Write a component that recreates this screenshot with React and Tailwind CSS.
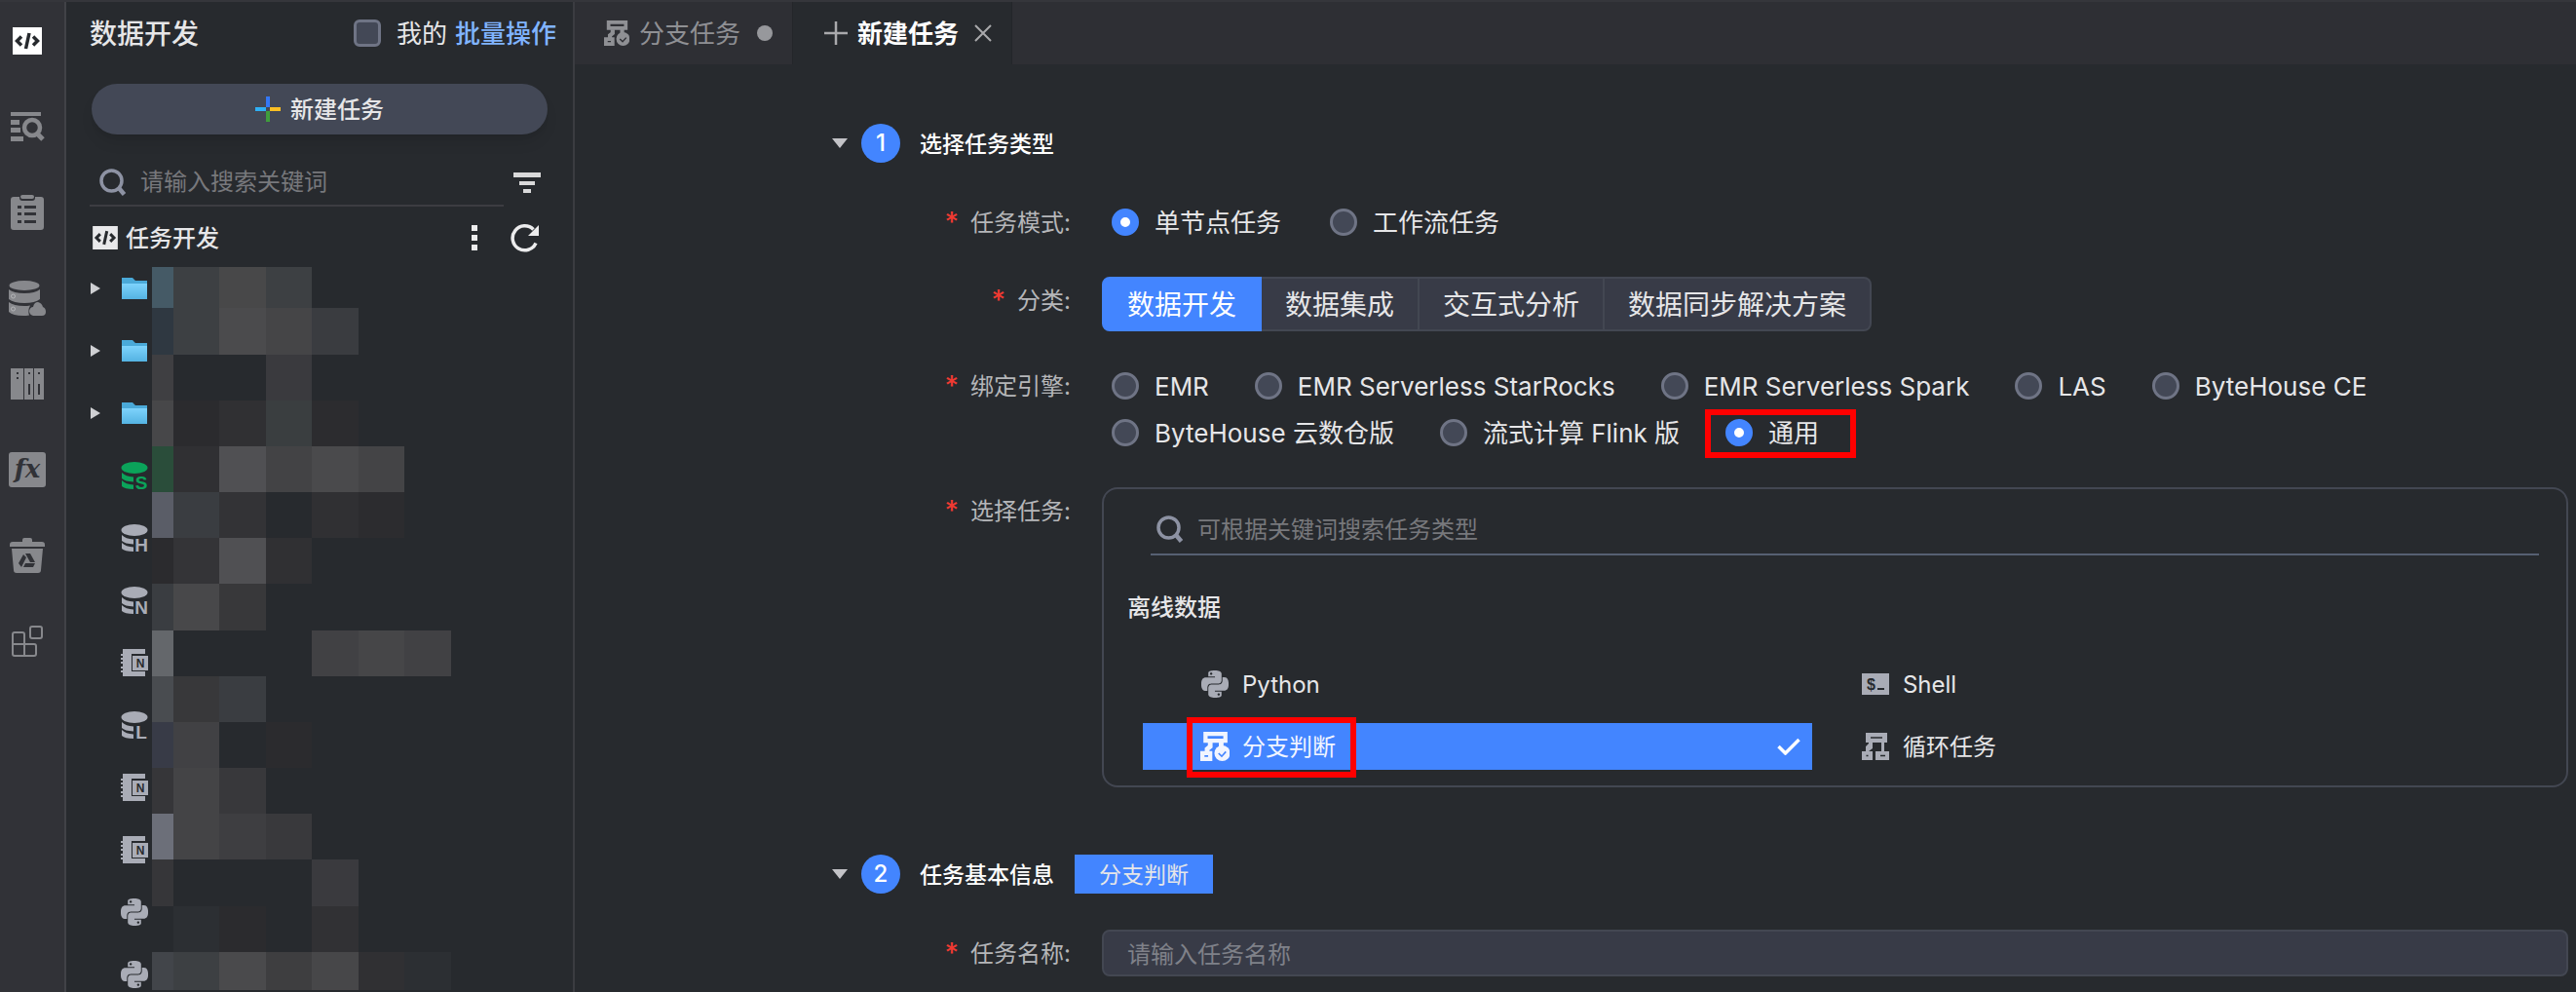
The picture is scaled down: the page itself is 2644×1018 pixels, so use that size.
import React, { useState } from 'react';
import clsx from 'clsx';
import { SiPython } from 'react-icons/si';

/* ---------- icons ---------- */

const CodeIcon = ({ className }) => (
  <svg viewBox="0 0 30 28" className={className}>
    <rect width="30" height="28" fill="currentColor" />
    <g fill="none" stroke="#272a2e" strokeWidth="3.500">
      <path d="M9 9.500L4.500 14 9 18.500M21 9.500l4.500 4.500-4.500 4.500M17 6l-3.500 16" />
    </g>
  </svg>
);

const QueryIcon = () => (
  <svg viewBox="0 0 36 34" className="h-[34px] w-9" fill="currentColor">
    <path d="M1 2h31v4H1zM1 10h9v5H1zM1 18h10v5H1zM1 27h13v5H1z" />
    <circle cx="23" cy="18" r="8" fill="none" stroke="currentColor" strokeWidth="4.500" />
    <path d="M28 24l6 6" stroke="currentColor" strokeWidth="5" />
  </svg>
);

const ClipboardIcon = () => (
  <svg viewBox="0 0 34 36" className="h-9 w-[34px]">
    <path fill="currentColor" d="M3 2h6v1q0 3 3 3h10q3 0 3-3V2h6q3 0 3 3v28q0 3-3 3H3q-3 0-3-3V5q0-3 3-3z" />
    <rect x="10" y="0" width="14" height="4" rx="2" fill="currentColor" />
    <path fill="#313237" d="M7 11h4v3H7zM14 11h12v3H14zM7 18h4v3H7zM14 18h12v3H14zM7 26h4v3H7zM14 26h12v3H14z" />
  </svg>
);

const DataCloudIcon = () => (
  <svg viewBox="0 0 38 36" className="h-9 w-[38px]" fill="currentColor">
    <ellipse cx="16" cy="5" rx="15.500" ry="5" />
    <path d="M0 9q5 4 16 4t16-4v10q-5 4-16 4T0 19z" />
    <path d="M0 22q5 4 16 4 3 0 6-.500-1 2-1.500 4-.500 3 .500 6-3 .500-6 .500Q4 36 0 32z" />
    <path d="M25 36q-4-1-4-5 1-4 4-4 1-5 5-5 4 1 5 5 3 1 3 5 0 4-4 4z" />
    <circle cx="4.500" cy="16" r="2" fill="none" stroke="#b4b5b8" />
    <circle cx="4.500" cy="29" r="2" fill="none" stroke="#b4b5b8" />
  </svg>
);

const BooksIcon = () => (
  <svg viewBox="0 0 34 32" className="h-8 w-[34px]">
    <path fill="currentColor" d="M0 0h13v32H0zM14 0h9v32h-9zM24 0h10v32H24z" />
    <path fill="#313237" d="M6 4h2v2H6zM6 9h2v2H6zM18 4h2v2h-2zM28 4h2v2h-2zM18 16h2v11h-2zM28 16h2v11h-2z" />
  </svg>
);

const FxIcon = () => (
  <svg viewBox="0 0 38 36" className="h-9 w-[38px]">
    <rect width="38" height="36" rx="3" fill="currentColor" />
    <text x="19" y="26" textAnchor="middle" fill="#313237" fontFamily="DejaVu Serif, serif" fontStyle="italic" fontWeight="700" fontSize="26">fx</text>
  </svg>
);

const TrashIcon = () => (
  <svg viewBox="0 0 36 36" className="size-9">
    <path fill="currentColor" d="M13 4V2q0-2 2-2h6q2 0 2 2v2h10q3 0 3 3v2H0V7q0-3 3-3zM2 11h32l-2 22q0 3-3 3H7q-3 0-3-3z" />
    <path fill="#313237" d="M14 17l3 3-5 10-3-4zM16 16h5l5 9h-5zM14 30l2-4h10l-2 4z" />
  </svg>
);

const BlocksIcon = () => (
  <svg viewBox="0 0 32 32" className="size-8" fill="none" stroke="currentColor" strokeWidth="2">
    <path d="M1 29V9q0-2 2-2h8q2 0 2 2v22M1 19h22q2 0 2 2v8q0 2-2 2H3q-2 0-2-2" />
    <rect x="19" y="1" width="12" height="12" rx="2" />
  </svg>
);

const SearchIcon = () => (
  <svg viewBox="0 0 28 28" className="size-7 shrink-0 text-[#8d92a3]" fill="none" stroke="currentColor" strokeWidth="3.500">
    <circle cx="12.500" cy="12.500" r="10.500" />
    <path d="M20 20l5.500 6.500" strokeWidth="4.500" />
  </svg>
);

const ColorPlusIcon = () => (
  <svg viewBox="0 0 26 26" className="size-[26px]">
    <path fill="#3478f6" d="M11 0h4v11h-4z" />
    <path fill="#2fb0f5" d="M0 11h11v4H0z" />
    <path fill="#fbbf24" d="M15 11h11v4H15z" />
    <path fill="#3f9d3c" d="M11 15h4v11h-4z" />
  </svg>
);

const FilterIcon = () => (
  <svg viewBox="0 0 28 22" className="h-[22px] w-7" fill="#d9d9da">
    <path d="M0 0h28v5H0zM6 9h16v4H6zM10 17h8v4h-8z" />
  </svg>
);

const RefreshIcon = () => (
  <svg viewBox="0 0 30 30" className="size-[30px]">
    <path d="M26 20.500A12.500 12.500 0 1 1 23.500 6.500" fill="none" stroke="#ececed" strokeWidth="3.500" />
    <path d="M29 2v11H18z" fill="#ececed" />
  </svg>
);

const FolderIcon = () => (
  <svg viewBox="0 0 26 22" className="h-[22px] w-[26px]">
    <defs>
      <linearGradient id="folder" x1="0" y1="0" x2="0" y2="1">
        <stop offset="0" stopColor="#7ed3fc" />
        <stop offset="1" stopColor="#54b3e2" />
      </linearGradient>
    </defs>
    <path fill="#4aa9d8" d="M0 0h11l3 3h12v6H0z" />
    <path fill="url(#folder)" d="M0 6h26v16H0z" />
  </svg>
);

const DbIcon = ({ letter }) => (
  <svg viewBox="0 0 28 28" className="size-7 overflow-visible" fill="currentColor">
    <ellipse cx="14" cy="6" rx="13.500" ry="6" />
    <path d="M1 11q4 4 12 4.500v5Q4 20 1 17zM1 19q4 4 12 4.500V28Q4 28 1 25z" />
    <text x="21" y="28" textAnchor="middle" fontFamily="Liberation Sans, sans-serif" fontWeight="700" fontSize="19">{letter}</text>
  </svg>
);

const NotebookIcon = () => (
  <svg viewBox="0 0 28 30" className="h-[30px] w-7">
    <path fill="currentColor" d="M2 1h23v5H12v18h13v5H2v-4H0v-2h2v-2H0v-2h2v-3H0v-2h2v-2H0v-2h2V8H0V6h2z" />
    <rect x="12" y="8" width="16" height="15" fill="currentColor" />
    <path d="M11.500 6v18" stroke="#272a2e" />
    <text x="20" y="20" textAnchor="middle" fill="#272a2e" fontFamily="Liberation Sans, sans-serif" fontWeight="700" fontSize="12">N</text>
  </svg>
);

const BranchIcon = ({ className, mark = '#272a2e' }) => (
  <svg viewBox="0 0 28 28" className={className}>
    <g fill="none" stroke="currentColor" strokeWidth="4">
      <path d="M5 2h19v6.500H5z" />
      <path d="M9.500 10v4l-3 2.500V20M20 9v5" strokeWidth="4.500" />
      <path d="M2 20.500h7.500V26H2z" />
    </g>
    <circle cx="21" cy="20.500" r="7.500" fill="currentColor" />
    <path d="M17.500 20.500l3 3 4-4.500" fill="none" stroke={mark} strokeWidth="1.500" />
  </svg>
);

const LoopIcon = () => (
  <svg viewBox="0 0 28 28" className="size-7">
    <path fill="currentColor" d="M4 0h22v10h-3v9h5v9H14v-9h6v-9H11v6l-4 3h4v9H0v-9h4v-5l3-3v-1H4z" />
    <path d="M9 5h12M4.500 23.500h2M19 23.500h5" stroke="#272a2e" strokeWidth="1.500" />
  </svg>
);

const ShellIcon = () => (
  <svg viewBox="0 0 28 22" className="h-[22px] w-7">
    <rect width="28" height="22" fill="currentColor" />
    <text x="5" y="17" fill="#272a2e" fontFamily="Liberation Sans, sans-serif" fontWeight="700" fontSize="16">$</text>
    <path d="M16 15h7v2h-7z" fill="#272a2e" />
  </svg>
);

const CaretDown = () => (
  <svg viewBox="0 0 16 10" className="h-2.5 w-4">
    <path d="M0 0h16L8 10z" fill="#c3c3c7" />
  </svg>
);

/* ---------- data ---------- */

const railItems = [
  { label: '数据开发', icon: <CodeIcon className="h-7 w-[30px]" />, active: true },
  { label: '查询', icon: <QueryIcon /> },
  { label: '运维', icon: <ClipboardIcon /> },
  { label: '数据源', icon: <DataCloudIcon /> },
  { label: '资源库', icon: <BooksIcon /> },
  { label: '函数', icon: <FxIcon /> },
  { label: '回收站', icon: <TrashIcon /> },
  { label: '扩展', icon: <BlocksIcon /> },
];

const treeItems = ['folder', 'folder', 'folder', 'S', 'H', 'N', 'note', 'L', 'note', 'note', 'python', 'python'];

// masked names, one array per row of cells
const mosaic = [
  ['#455a66', '#3d4043', '#484849', '#3d4043', '', '', ''],
  ['#2f3841', '#3d4043', '#4b4b4d', '#454547', '#3a3c40', '', ''],
  ['#3f3f42', '', '', '#3a3a3e', '', '', ''],
  ['#474749', '#2b2b2e', '#303033', '#3a3e40', '#2c2c2f', '', ''],
  ['#2a4d3a', '#303033', '#505053', '#434345', '#4a4a4c', '#444446', ''],
  ['#5a5d67', '#3a3d41', '#333336', '', '#303033', '#2c2c2f', ''],
  ['#2b2b2e', '#343437', '#505053', '#303033', '', '', ''],
  ['#3a3d41', '#48484a', '#38383a', '', '', '', ''],
  ['#64676b', '', '', '', '#414144', '#464648', '#414144'],
  ['#494c50', '#38383a', '#3a3d41', '', '', '', ''],
  ['#383b47', '#414144', '', '#2b2b2e', '', '', ''],
  ['#363639', '#444446', '#38383b', '', '', '', ''],
  ['#6c6f79', '#444446', '#3e3e41', '#39393c', '', '', ''],
  ['#363639', '', '', '', '#3a3a3e', '', ''],
  ['', '#2c2f33', '#2b2b2e', '', '#313134', '', ''],
  ['#42454a', '#3d4043', '#4a4a4c', '#3e3e40', '#474749', '#303033', '#2c2f33'],
];

const categories = ['数据开发', '数据集成', '交互式分析', '数据同步解决方案'];
const engines = [
  'EMR',
  'EMR Serverless StarRocks',
  'EMR Serverless Spark',
  'LAS',
  'ByteHouse CE',
  'ByteHouse 云数仓版',
  '流式计算 Flink 版',
  '通用',
];

const taskTypes = [
  { name: 'Python', icon: <SiPython className="size-7" /> },
  { name: 'Shell', icon: <ShellIcon /> },
  { name: '分支判断', icon: <BranchIcon className="size-[30px]" mark="#4385ff" /> },
  { name: '循环任务', icon: <LoopIcon /> },
];

/* ---------- pieces ---------- */

const TreeIcon = ({ type }) => {
  if (type === 'folder') return <FolderIcon />;
  if (type === 'note') return <NotebookIcon />;
  if (type === 'python') return <SiPython className="size-7" />;
  return <DbIcon letter={type} />;
};

const Rail = () => (
  <nav className="flex w-[68px] shrink-0 flex-col gap-12 border-r-2 border-[#414247] bg-[#313237] pt-5">
    {railItems.map((item) => (
      <button
        key={item.label}
        aria-label={item.label}
        className={clsx('flex h-10 items-center justify-center pr-2.5', item.active ? 'text-white' : 'text-[#87888c]')}
      >
        {item.icon}
      </button>
    ))}
  </nav>
);

const Sidebar = () => (
  <aside className="flex w-[522px] shrink-0 flex-col border-r-2 border-[#3b3c41]">
    <div className="flex h-16 items-center pl-6 pr-[17px]">
      <h1 className="flex-1 pt-0.5 text-[28px] font-medium">数据开发</h1>
      <label className="flex items-center gap-4 text-[26px]">
        <input type="checkbox" className="size-7 appearance-none rounded-md border-3 border-[#6f7485] bg-[#434856] checked:bg-[#4385ff]" />
        <span className="pt-0.5">我的</span>
      </label>
      <a href="#batch" className="ml-2 pt-0.5 text-[26px] font-medium text-[#80b4ff]">批量操作</a>
    </div>

    <button className="mx-[26px] mt-5 flex h-13 shrink-0 items-center justify-center gap-2.5 rounded-[26px] bg-[#434856] text-2xl font-medium shadow-lg">
      <ColorPlusIcon />
      <span className="pt-0.5">新建任务</span>
    </button>

    <div className="mt-[26px] flex h-12 shrink-0 pl-6">
      <div className="flex flex-1 items-center gap-3.5 border-b-2 border-[#3c3d42] pl-2.5">
        <SearchIcon />
        <input
          aria-label="搜索"
          placeholder="请输入搜索关键词"
          className="min-w-0 flex-1 bg-transparent text-2xl outline-none placeholder:text-[#77787c]"
        />
      </div>
      <button aria-label="筛选" className="flex w-[72px] items-center pl-2.5">
        <FilterIcon />
      </button>
    </div>

    <div className="mt-3 flex h-10 shrink-0 items-center pl-[27px] pr-[34px]">
      <CodeIcon className="h-6 w-[26px] text-[#e8e8ea]" />
      <h2 className="ml-2 flex-1 pt-0.5 text-2xl font-medium">任务开发</h2>
      <button aria-label="更多" className="mr-[34px]">
        <svg viewBox="0 0 6 26" className="h-[26px] w-1.5" fill="#ececed">
          <path d="M0 0h6v6H0zM0 10h6v6H0zM0 20h6v6H0z" />
        </svg>
      </button>
      <button aria-label="刷新">
        <RefreshIcon />
      </button>
    </div>

    <div className="relative min-h-0 flex-1 overflow-hidden">
      <ul>
        {treeItems.map((type, i) => (
          <li key={i} className="flex h-16 items-center pl-[25px]">
            <span className="w-[31px] shrink-0">
              {type === 'folder' && (
                <svg viewBox="0 0 10 12" className="h-3 w-2.5">
                  <path d="M0 0l10 6-10 6z" fill="#cfd0d3" />
                </svg>
              )}
            </span>
            <span className={clsx('flex w-7 justify-center', type === 'S' ? 'text-[#0ba35a]' : 'text-[#a9acb6]')}>
              <TreeIcon type={type} />
            </span>
          </li>
        ))}
      </ul>
      <div className="absolute top-2.5 left-[88px] grid grid-cols-[22px_47px_48px_47px_48px_47px_48px] grid-rows-[42px_48px_47px_47px_47px_47px_47px_48px_47px_47px_47px_47px_47px_48px_47px_39px]">
        {mosaic.flat().map((color, i) => (
          <span key={i} style={{ backgroundColor: color || 'transparent' }} />
        ))}
      </div>
    </div>
  </aside>
);

const Tabs = () => (
  <div className="flex h-16 shrink-0 bg-[#2e2f34] text-[26px]">
    <button className="flex items-center border-r border-[#232529] pl-[30px] pr-5 text-[#8f9094]">
      <BranchIcon className="size-[26px]" mark="#2e2f34" />
      <span className="ml-2.5 pt-0.5">分支任务</span>
      <span className="ml-[17px] size-4 rounded-full bg-[#97989c]" />
    </button>
    <div className="flex items-center border-r border-[#232529] bg-[#272a2e] pl-8 pr-5">
      <svg viewBox="0 0 24 24" className="size-6">
        <path d="M12 0v24M0 12h24" stroke="#a9a9ac" strokeWidth="2.500" />
      </svg>
      <span className="ml-2.5 pt-0.5 font-bold text-white">新建任务</span>
      <button aria-label="关闭" className="ml-4">
        <svg viewBox="0 0 18 18" className="size-[18px]">
          <path d="M1 1l16 16M17 1L1 17" stroke="#a9a9ac" strokeWidth="2" />
        </svg>
      </button>
    </div>
  </div>
);

const SectionHead = ({ step, title, children }) => (
  <div className="mb-[37px] flex h-10 items-center">
    <CaretDown />
    <span className="ml-3.5 flex size-10 items-center justify-center rounded-full bg-[#4385ff] text-2xl font-medium text-white">{step}</span>
    <h2 className="ml-5 pt-0.5 text-[23px] font-medium text-white">{title}</h2>
    {children}
  </div>
);

const Row = ({ label, htmlFor, children }) => {
  const Tag = htmlFor ? 'label' : 'span';
  return (
    <div className="mb-8 flex gap-8">
      <Tag htmlFor={htmlFor} className="flex h-12 w-[245px] shrink-0 items-center justify-end pt-0.5 text-2xl text-[#b5b6b9]">
        <span className="mr-3 text-[28px] font-medium text-[#f03a32]">*</span>
        {label}:
      </Tag>
      <div className="min-w-0 flex-1">{children}</div>
    </div>
  );
};

const Radio = ({ name, label, checked, onChange, boxed }) => (
  <label className="relative flex h-12 items-center gap-4 text-[26px]">
    <input
      type="radio"
      name={name}
      checked={checked}
      onChange={onChange}
      className="size-7 appearance-none rounded-full border-3 border-[#6f7485] bg-[#434856] checked:border-9 checked:border-[#4385ff] checked:bg-white"
    />
    <span className="pt-0.5">{label}</span>
    {boxed && <span className="pointer-events-none absolute top-0 -bottom-0.5 -left-[21px] -right-[38px] border-6 border-[#ff0000]" />}
  </label>
);

const App = () => {
  const [mode, setMode] = useState('单节点任务');
  const [category, setCategory] = useState('数据开发');
  const [engine, setEngine] = useState('通用');
  const [task, setTask] = useState('分支判断');

  return (
    <div className="flex h-screen overflow-hidden border-t-2 border-[#35363b] bg-[#272a2e] font-['Inter','Noto_Sans_CJK_SC',sans-serif] leading-none text-[#e6e6e8]">
      <Rail />
      <Sidebar />

      <main className="flex min-w-0 flex-1 flex-col">
        <Tabs />

        <form className="flex-1 overflow-hidden pt-[61px] pl-66 pr-2">
          <SectionHead step="1" title="选择任务类型" />

          <Row label="任务模式">
            <div className="flex gap-[50px] pl-2.5">
              {['单节点任务', '工作流任务'].map((m) => (
                <Radio key={m} name="mode" label={m} checked={mode === m} onChange={() => setMode(m)} />
              ))}
            </div>
          </Row>

          <Row label="分类">
            <div className="flex h-14 text-[28px]">
              {categories.map((c) => (
                <button
                  type="button"
                  key={c}
                  onClick={() => setCategory(c)}
                  className={clsx(
                    'border-y-2 border-r-2 px-6 pt-0.5 first:rounded-l-lg first:border-l-2 last:rounded-r-lg',
                    category === c ? 'border-[#4385ff] bg-[#4385ff] text-white' : 'border-[#434752] bg-[#383b47]'
                  )}
                >
                  {c}
                </button>
              ))}
            </div>
          </Row>

          <Row label="绑定引擎">
            <div className="flex max-w-[1400px] flex-wrap gap-x-[47px] pl-2.5">
              {engines.map((e) => (
                <Radio key={e} name="engine" label={e} checked={engine === e} onChange={() => setEngine(e)} boxed={e === '通用'} />
              ))}
            </div>
          </Row>

          <Row label="选择任务">
            <div className="rounded-2xl border-2 border-[#434752] pb-4">
              <div className="ml-12 mr-7 flex h-[68px] items-center gap-3.5 border-b-2 border-[#566072] pl-1.5 pt-4">
                <SearchIcon />
                <input
                  aria-label="搜索任务类型"
                  placeholder="可根据关键词搜索任务类型"
                  className="min-w-0 flex-1 bg-transparent pt-0.5 text-2xl outline-none placeholder:text-[#77787c]"
                />
              </div>
              <h3 className="mt-10 pl-6 text-2xl/7 font-medium">离线数据</h3>
              <div className="mt-10 flex flex-wrap gap-y-4 pl-10">
                {taskTypes.map((t) => (
                  <div key={t.name} className="w-[46.4%]">
                    <button
                      type="button"
                      onClick={() => setTask(t.name)}
                      className={clsx(
                        'relative flex h-12 w-[calc(100%+9px)] items-center pl-[59px] pr-3 text-2xl',
                        task === t.name ? 'bg-[#4385ff] text-[#f1f5ff]' : ''
                      )}
                    >
                      <span className={clsx('mr-[13px] flex w-[30px] justify-center', task !== t.name && 'text-[#a9acb6]')}>{t.icon}</span>
                      <span className="pt-0.5">{t.name}</span>
                      {task === t.name && (
                        <svg viewBox="0 0 24 18" className="ml-auto h-[18px] w-6">
                          <path d="M1.500 9l7 7L22.500 2" fill="none" stroke="#fff" strokeWidth="3.500" />
                        </svg>
                      )}
                      {t.name === '分支判断' && (
                        <span className="pointer-events-none absolute -top-1.5 -bottom-2 left-[45px] w-[174px] border-6 border-[#ff0000]" />
                      )}
                    </button>
                  </div>
                ))}
              </div>
            </div>
          </Row>

          <div className="pt-[37px]">
            <SectionHead step="2" title="任务基本信息">
              <span className="ml-[21px] flex h-10 items-center bg-[#4385ff] px-[25px] pt-0.5 text-[23px]">{task}</span>
            </SectionHead>
            <Row label="任务名称" htmlFor="task-name">
              <input
                id="task-name"
                placeholder="请输入任务名称"
                className="block h-12 w-full rounded-lg border-2 border-[#434752] bg-[#383b47] px-6 pt-0.5 text-2xl outline-none placeholder:text-[#7f8189]"
              />
            </Row>
          </div>
        </form>
      </main>
    </div>
  );
};

export default App;
